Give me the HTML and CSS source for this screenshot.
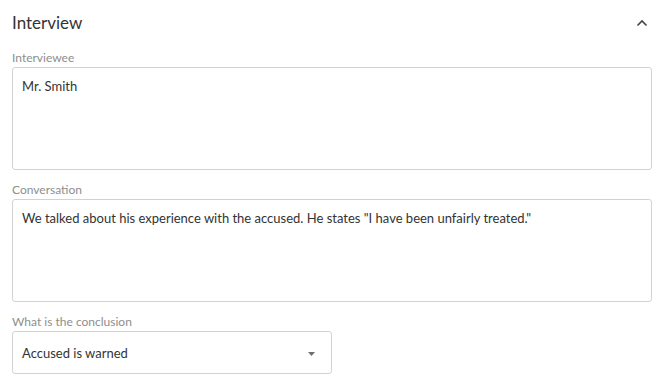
FILE: index.html
```html
<!DOCTYPE html>
<html lang="en">
<head>
	<meta charset="UTF-8">
	<meta name="viewport" content="width=device-width, initial-scale=1.0">
	<title>Interview</title>
	<link rel="stylesheet" href="styles.css">
</head>
<body>
	<div class="section">
		<div class="section-head">
			<h2 class="section-title">Interview</h2>
			<svg class="chevron" width="12" height="8" viewBox="0 0 12 8">
				<path d="M1.5 6.5 L6 2 L10.5 6.5" fill="none" stroke="#444" stroke-width="1.6"/>
			</svg>
		</div>

		<div class="field">
			<label class="field-label">Interviewee</label>
			<div class="text-box">Mr. Smith</div>
		</div>

		<div class="field">
			<label class="field-label">Conversation</label>
			<div class="text-box">We talked about his experience with the accused. He states "I have been unfairly treated."</div>
		</div>

		<div class="field">
			<label class="field-label">What is the conclusion</label>
			<div class="select-box">
				<span>Accused is warned</span>
				<svg class="caret" width="7" height="4" viewBox="0 0 7 4">
					<path d="M0 0 L7 0 L3.5 4 Z" fill="#6e6e6e"/>
				</svg>
			</div>
		</div>
	</div>
</body>
</html>
```

FILE: styles.css
```css
body {
	font-family: Lato, "Noto Sans", sans-serif;
	margin: 0;
	padding: 0;
	background-color: #fff;
	color: #333;
}
.section {
	padding: 12px 18px 0 12px;
}
.section-head {
	display: flex;
	align-items: center;
	justify-content: space-between;
	padding-right: 4px;
	margin-bottom: 18px;
}
.section-title {
	margin: 0;
	font-size: 17px;
	font-weight: normal;
	color: #333;
}
.chevron {
	display: block;
}
.field {
	margin-bottom: 13px;
}
.field-label {
	display: block;
	font-size: 12px;
	line-height: 14px;
	color: #8e8e8e;
	margin-bottom: 2px;
}
.text-box {
	height: 103px;
	box-sizing: border-box;
	border: 1px solid #d2d2d2;
	border-radius: 3px;
	padding: 10px 9px;
	font-size: 13px;
	color: #333;
}
.select-box {
	width: 320px;
	height: 43px;
	margin-top: 1px;
	box-sizing: border-box;
	border: 1px solid #d2d2d2;
	border-radius: 3px;
	padding: 0 16px 0 9px;
	display: flex;
	align-items: center;
	justify-content: space-between;
	font-size: 13px;
	color: #333;
}
.caret {
	display: block;
	margin-top: 2px;
}
```
